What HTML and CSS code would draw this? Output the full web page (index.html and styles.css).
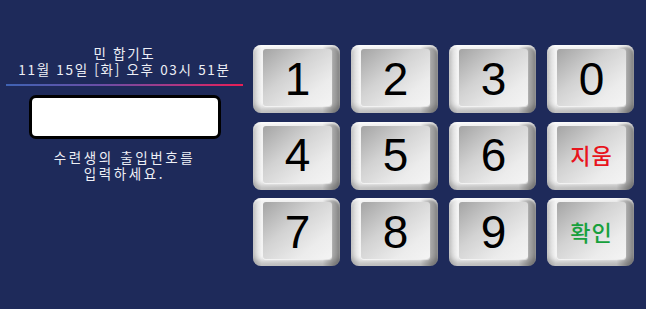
FILE: index.html
```html
<!DOCTYPE html>
<html lang="ko">
<head>
<meta charset="utf-8">
<link rel="stylesheet" href="styles.css">
</head>
<body>
<div class="screen">
  <div class="info">
    <div class="title">민 합기도</div>
    <div class="date">11월 15일 [화] 오후 03시 51분</div>
    <div class="rule"></div>
    <div class="input"></div>
    <div class="hint">수련생의 출입번호를</div>
    <div class="hint2">입력하세요.</div>
  </div>
  <div class="pad">
    <div class="key"><div class="face">1</div></div>
    <div class="key"><div class="face">2</div></div>
    <div class="key"><div class="face">3</div></div>
    <div class="key"><div class="face">0</div></div>
    <div class="key"><div class="face">4</div></div>
    <div class="key"><div class="face">5</div></div>
    <div class="key"><div class="face">6</div></div>
    <div class="key"><div class="face label red">지움</div></div>
    <div class="key"><div class="face">7</div></div>
    <div class="key"><div class="face">8</div></div>
    <div class="key"><div class="face">9</div></div>
    <div class="key"><div class="face label green">확인</div></div>
  </div>
</div>
</body>
</html>
```

FILE: styles.css
```css
html, body {
  margin: 0;
  padding: 0;
  background: #1e2a5a;
  width: 646px;
  height: 309px;
  overflow: hidden;
}
.screen {
  display: flex;
  padding: 45px 0 0 6px;
  gap: 10px;
  font-family: "Noto Sans CJK KR", "Noto Sans", sans-serif;
  color: #eef0f6;
}
.info {
  width: 237px;
  display: flex;
  flex-direction: column;
  align-items: center;
  font-size: 13.5px;
  line-height: 16px;
  letter-spacing: 1.7px;
  text-align: center;
}
.title, .date, .hint, .hint2 {
  height: 16px;
  white-space: nowrap;
}
.rule {
  align-self: stretch;
  height: 2px;
  margin-top: 7px;
  background: linear-gradient(to right, #3f63b3, #6a4ea6 40%, #b33580 75%, #e81e55);
}
.input {
  width: 186px;
  height: 38px;
  margin-top: 9px;
  background: #fff;
  border: 3px solid #000;
  border-radius: 7px;
}
.hint {
  margin-top: 10px;
  letter-spacing: 2.6px;
}
.hint2 {
  letter-spacing: 2.6px;
}
.pad {
  display: grid;
  grid-template-columns: repeat(4, 87px);
  grid-template-rows: repeat(3, 68px);
  column-gap: 11px;
  row-gap: 8.5px;
}
.key {
  border-radius: 8px;
  padding: 4px 8px 7px 10px;
  background: linear-gradient(to right, #cfcfcf 0%, #f4f4f4 10%, #e9e9e9 80%, #a6a6a6 92%, #8a8a8a 100%);
  box-shadow: inset 0 -5px 5px rgba(0,0,0,0.22), inset 0 2px 2px rgba(255,255,255,0.7);
  display: flex;
}
.face {
  flex: 1;
  border-radius: 3px;
  background: linear-gradient(140deg, #a4a4a4 0%, #d2d2d2 40%, #ececec 75%, #f4f4f4 100%);
  box-shadow: 0 1px 1px rgba(255,255,255,0.6);
  display: flex;
  align-items: center;
  justify-content: center;
  font-family: "Liberation Sans", Arial, sans-serif;
  font-size: 46px;
  color: #000;
  padding-top: 2px;
}
.label {
  font-family: "Noto Sans CJK KR", sans-serif;
  font-size: 22px;
  font-weight: 500;
  letter-spacing: 1px;
  padding-top: 0;
}
.red { color: #e8141c; }
.green { color: #17a03c; }
```
